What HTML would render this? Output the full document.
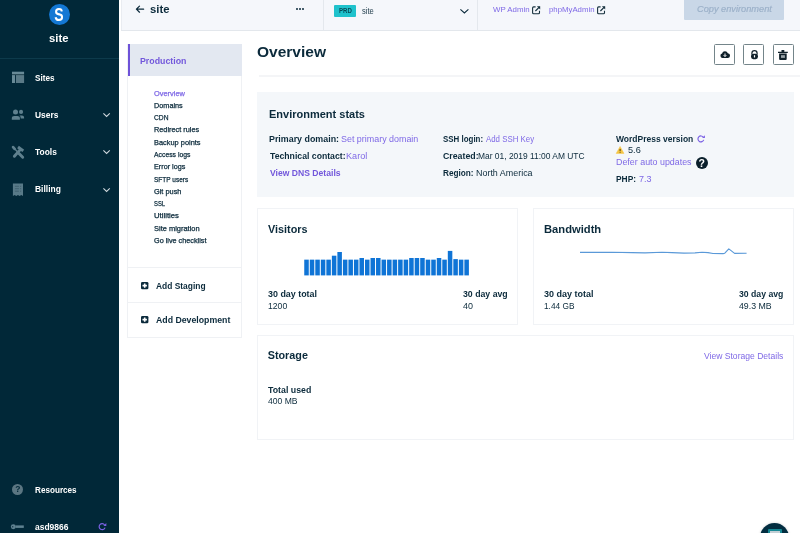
<!DOCTYPE html>
<html>
<head>
<meta charset="utf-8">
<title>site</title>
<style>
*{box-sizing:border-box;margin:0;padding:0}
html,body{width:800px;height:533px;overflow:hidden;background:#fff}
body{font-family:"Liberation Sans",sans-serif;color:#0b2a3b;position:relative}
.a{position:absolute}
.t{position:absolute;white-space:pre;font-family:"Liberation Sans",sans-serif;transform-origin:0 0}
svg{position:absolute;overflow:visible}
#side{position:absolute;left:0;top:0;width:119px;height:533px;background:#012838}
.ib{position:absolute;top:44px;width:21px;height:21px;border:1px solid #74858a;border-radius:1.5px;background:#fff}
.card{position:absolute;border:1px solid #f1f3f6;background:#fff}
</style>
</head>
<body>
<div id="root" style="position:absolute;left:0;top:0;width:800px;height:533px;will-change:transform;overflow:hidden">
<!-- sidebar -->
<div id="side"></div>
<div class="a" style="left:0;top:58px;width:119px;height:1px;background:#0d3a4b"></div>
<div class="a" style="left:48.75px;top:3.75px;width:21px;height:21px;border-radius:50%;background:#1478d4"></div>
<div class="t" style="left:53.2px;top:4.5px;width:12px;text-align:center;font-size:17.5px;line-height:21.5px;font-weight:bold;color:#fff;transform-origin:50% 50%;transform:scaleX(.8)">S</div>

<!-- sidebar icons -->
<svg style="left:0;top:0" width="119" height="533" viewBox="0 0 119 533">
  <!-- sites -->
  <rect x="12" y="71.7" width="12.1" height="2.3" fill="#688a97"/>
  <rect x="12" y="74" width="12.1" height="1.1" fill="#2b4c59"/>
  <rect x="12" y="75.1" width="3" height="7.9" fill="#688a97"/>
  <rect x="15.9" y="75.1" width="8.2" height="7.9" fill="#5a7a87"/>
  <!-- users -->
  <g fill="#5f808e">
  <circle cx="15.5" cy="111.9" r="2.5"/>
  <circle cx="21.05" cy="111.9" r="2.05"/>
  <path d="M11.8 119.8 V118.4 Q11.8 116 14.4 116 H17.2 Q19.9 116 19.9 118.4 V119.8 Z"/>
  <path d="M20.7 118.5 V117.9 Q20.7 116.4 19.5 115.5 H22 Q24.1 115.5 24.1 117.5 V118.5 Z"/>
  </g>
  <!-- tools -->
  <g stroke="#5f808e" fill="none">
  <path d="M14.4 156.3 L19.8 150.1" stroke-width="2.9" stroke-linecap="round"/>
  <path d="M18.0 147.0 L23.3 150.9" stroke-width="2.9"/>
  <path d="M19 153.5 L22.7 157.2" stroke-width="2.9" stroke-linecap="round"/>
  <path d="M14.4 148.6 L19 153.5" stroke-width="1.4"/>
  <path d="M13.1 147.1 L14.6 148.8" stroke-width="2.7" stroke-linecap="round"/>
  </g>
  <!-- billing -->
  <path d="M12.9 183.6 H23 V195.9 L21.3 194.9 L19.6 195.9 L17.95 194.9 L16.3 195.9 L14.6 194.9 L12.9 195.9 Z" fill="#587a88"/>
  <g stroke="#3b5c6a" stroke-width=".8"><path d="M14.9 186.3H18.9M20 186.3H21.2M14.9 188.7H18.9M20 188.7H21.2M14.9 191.2H18.9M20 191.2H21.2"/></g>
</svg>
<svg style="left:103px;top:112.6px" width="7.2" height="4" viewBox="0 0 7.2 4" fill="none" stroke="#d0d9de" stroke-width="1.1"><path d="M.4 .4 L3.6 3.4 L6.8 .4"/></svg>
<svg style="left:103px;top:150.1px" width="7.2" height="4" viewBox="0 0 7.2 4" fill="none" stroke="#d0d9de" stroke-width="1.1"><path d="M.4 .4 L3.6 3.4 L6.8 .4"/></svg>
<svg style="left:103px;top:187.6px" width="7.2" height="4" viewBox="0 0 7.2 4" fill="none" stroke="#d0d9de" stroke-width="1.1"><path d="M.4 .4 L3.6 3.4 L6.8 .4"/></svg>
<!-- resources ? -->
<div class="a" style="left:12.3px;top:484.2px;width:11px;height:11px;border-radius:50%;background:#5b7682"></div>
<div class="t" style="left:12.3px;top:484.4px;width:11px;text-align:center;font-size:8.5px;line-height:11px;font-weight:bold;color:#012838">?</div>
<!-- key -->
<svg style="left:0;top:0" width="119" height="533" viewBox="0 0 119 533"><circle cx="13.3" cy="526.7" r="2.45" fill="#5f8291"/><circle cx="12.7" cy="526.7" r=".75" fill="#17394a"/><rect x="15.4" y="525.4" width="8.4" height="2.5" fill="#5f8291"/></svg>
<!-- refresh purple -->
<svg style="left:98.2px;top:523px" width="8.6" height="7.6" viewBox="0 0 8.6 7.6" fill="none" stroke="#7b61e4" stroke-width="1.2">
  <path d="M6.6 2 A3 3 0 1 0 7 4.6"/><path d="M8.3 0 V2.9 H5.4 Z" fill="#7b61e4" stroke="none"/>
</svg>

<!-- top bar -->
<div class="a" style="left:121px;top:0;width:679px;height:30px;background:#f5f7fb"></div>
<div class="a" style="left:121px;top:0;width:1px;height:30px;background:#e9ecf1"></div>
<div class="a" style="left:121px;top:30px;width:679px;height:1px;background:#e3e7ec"></div>
<div class="a" style="left:323px;top:0;width:1px;height:30px;background:#e4e8ed"></div>
<div class="a" style="left:477px;top:0;width:1px;height:30px;background:#e4e8ed"></div>
<svg style="left:0;top:0" width="200" height="30" viewBox="0 0 200 30" fill="none" stroke="#0b2a3b" stroke-width="1.25" stroke-linejoin="round" stroke-linecap="round"><path d="M143.6 9.15 H136.6 M139.5 6.1 L136.4 9.15 L139.5 12.2"/></svg>
<div class="a" style="left:296.2px;top:8px;width:2.1px;height:2.1px;border-radius:50%;background:#0b2a3b"></div>
<div class="a" style="left:299.2px;top:8px;width:2.1px;height:2.1px;border-radius:50%;background:#0b2a3b"></div>
<div class="a" style="left:302.2px;top:8px;width:2.1px;height:2.1px;border-radius:50%;background:#0b2a3b"></div>
<div class="a" style="left:334.2px;top:5px;width:21.8px;height:11.8px;background:#1fc2cc;border-radius:1px"></div>
<svg style="left:460px;top:9.2px" width="8.8" height="4.6" viewBox="0 0 8.8 4.6" fill="none" stroke="#0b2a3b" stroke-width="1.1"><path d="M.4 .4 L4.4 4 L8.4 .4"/></svg>
<!-- external link icons -->
<svg style="left:532.4px;top:5.6px" width="8.4" height="8.4" viewBox="0 0 8.4 8.4" fill="none" stroke="#17323f" stroke-width="1.1"><path d="M3.6 .9 H1.6 Q.6 .9 .6 1.9 V6.8 Q.6 7.8 1.6 7.8 H6.5 Q7.5 7.8 7.5 6.8 V4.8"/><path d="M3.4 5 L7.6 .8" stroke-width="1.2"/><path d="M4.9 .2 H8.2 V3.5 Z" fill="#17323f" stroke="none"/></svg>
<svg style="left:597.4px;top:5.6px" width="8.4" height="8.4" viewBox="0 0 8.4 8.4" fill="none" stroke="#17323f" stroke-width="1.1"><path d="M3.6 .9 H1.6 Q.6 .9 .6 1.9 V6.8 Q.6 7.8 1.6 7.8 H6.5 Q7.5 7.8 7.5 6.8 V4.8"/><path d="M3.4 5 L7.6 .8" stroke-width="1.2"/><path d="M4.9 .2 H8.2 V3.5 Z" fill="#17323f" stroke="none"/></svg>
<div class="a" style="left:684px;top:0;width:100.4px;height:19.6px;background:#c9d7e7;border-radius:0 0 1px 1px"></div>

<!-- left nav panel -->
<div class="a" style="left:127px;top:44px;width:115px;height:293.5px;border:1px solid #eff1f4;background:#fff"></div>
<div class="a" style="left:127.5px;top:44px;width:114px;height:32px;background:#e3e8f1"></div>
<div class="a" style="left:127.5px;top:44px;width:2.4px;height:32px;background:#6e52d8"></div>
<div class="a" style="left:128px;top:267px;width:113px;height:1px;background:#eff1f4"></div>
<div class="a" style="left:128px;top:302px;width:113px;height:1px;background:#eff1f4"></div>
<svg style="left:141px;top:282.3px" width="7.4" height="7.2" viewBox="0 0 7.4 7.2"><rect x="0" y="0" width="7.4" height="7.2" rx="1.3" fill="#0b2a3b"/><path d="M3.7 1.4V5.8M1.5 3.6H5.9" stroke="#fff" stroke-width="1.6"/></svg>
<svg style="left:141px;top:316.2px" width="7.4" height="7.2" viewBox="0 0 7.4 7.2"><rect x="0" y="0" width="7.4" height="7.2" rx="1.3" fill="#0b2a3b"/><path d="M3.7 1.4V5.8M1.5 3.6H5.9" stroke="#fff" stroke-width="1.6"/></svg>

<!-- main header -->
<div class="ib" style="left:714px"></div>
<div class="ib" style="left:743.2px"></div>
<div class="ib" style="left:773px"></div>
<!-- cloud download -->
<svg style="left:720.1px;top:51.2px" width="10" height="7" viewBox="0 0 10 7.4"><path d="M2.4 7.4 A2.4 2.4 0 0 1 1.9 2.7 A3.2 3.2 0 0 1 8 2.4 A2.5 2.5 0 0 1 7.6 7.4 Z" fill="#10202a"/><path d="M5 2.6V5.6M3.6 4.4L5 5.9L6.4 4.4" stroke="#fff" stroke-width="1" fill="none"/></svg>
<!-- lock -->
<svg style="left:750.5px;top:49.9px" width="7" height="9.2" viewBox="0 0 7 9.2"><path d="M.9 4.4 V3.2 A2.6 2.6 0 0 1 6.1 3.2 V4.4" fill="#fff" stroke="#10202a" stroke-width="1.2"/><rect x="0" y="3.7" width="7" height="5.5" rx="2.4" fill="#10202a"/><rect x="2.9" y="5.2" width="1.2" height="2.3" fill="#fff"/></svg>
<!-- trash -->
<svg style="left:778.4px;top:49.6px" width="9.8" height="10.1" viewBox="0 0 9.8 10.1"><path d="M0 1.7H9.8V3H0Z M3.5 0H6.3V1.7H3.5Z" fill="#10202a"/><path d="M1.1 3.5H8.7V9.1Q8.7 10.1 7.7 10.1H2.1Q1.1 10.1 1.1 9.1Z" fill="#10202a"/><path d="M3 5.2H6.9V7.9H3Z" fill="#9aa4a9"/></svg>
<div class="a" style="left:259px;top:75px;width:541px;height:1.5px;background:#f4f5f7"></div>

<!-- env stats -->
<div class="a" style="left:257px;top:92px;width:537px;height:105px;background:#f4f7fa"></div>
<!-- refresh -->
<svg style="left:697.2px;top:134.8px" width="8.2" height="7.8" viewBox="0 0 9.4 9" fill="none" stroke="#7b61e4" stroke-width="1.35">
  <path d="M7.3 2.6 A3.4 3.4 0 1 0 7.7 5.6"/><path d="M9.1 .3 V3.5 H5.9 Z" fill="#7b61e4" stroke="none"/>
</svg>
<!-- warning -->
<svg style="left:616.2px;top:146px" width="8.2" height="7.9" viewBox="0 0 8.2 7.6"><path d="M4.1 .3 L8 7.3 H.2 Z" fill="#f4c542" stroke="#f4c542" stroke-width=".5" stroke-linejoin="round"/><path d="M4.1 2.8V5" stroke="#4a3a14" stroke-width="1"/><circle cx="4.1" cy="6.1" r=".55" fill="#4a3a14"/></svg>
<!-- help -->
<div class="a" style="left:695.6px;top:157px;width:12.3px;height:12.3px;border-radius:50%;background:#0a1f2b"></div>
<div class="t" style="left:695.6px;top:157px;width:12.3px;text-align:center;font-size:10.5px;line-height:12.5px;font-weight:bold;color:#fff">?</div>

<!-- cards -->
<div class="card" style="left:257px;top:207.5px;width:261px;height:117px"></div>
<div class="card" style="left:533.3px;top:207.5px;width:261px;height:117px"></div>
<div class="card" style="left:257px;top:335.3px;width:537.3px;height:104.5px"></div>

<!-- bar chart -->
<svg style="left:0;top:0" width="800" height="533" viewBox="0 0 800 533"><g fill="#0f74d6">
<rect x="304.25" y="259.65" width="4.52" height="15.75"/><rect x="309.77" y="259.65" width="4.52" height="15.75"/><rect x="315.29" y="259.65" width="4.52" height="15.75"/><rect x="320.81" y="259.65" width="4.52" height="15.75"/><rect x="326.34" y="259.65" width="4.52" height="15.75"/><rect x="331.86" y="255.70" width="4.52" height="19.70"/><rect x="337.38" y="252.00" width="4.52" height="23.40"/><rect x="342.90" y="259.65" width="4.52" height="15.75"/><rect x="348.42" y="259.65" width="4.52" height="15.75"/><rect x="353.94" y="259.65" width="4.52" height="15.75"/><rect x="359.47" y="258.00" width="4.52" height="17.40"/><rect x="364.99" y="259.65" width="4.52" height="15.75"/><rect x="370.51" y="258.00" width="4.52" height="17.40"/><rect x="376.03" y="258.00" width="4.52" height="17.40"/><rect x="381.55" y="259.65" width="4.52" height="15.75"/><rect x="387.07" y="259.65" width="4.52" height="15.75"/><rect x="392.60" y="259.65" width="4.52" height="15.75"/><rect x="398.12" y="259.65" width="4.52" height="15.75"/><rect x="403.64" y="259.65" width="4.52" height="15.75"/><rect x="409.16" y="258.00" width="4.52" height="17.40"/><rect x="414.68" y="258.00" width="4.52" height="17.40"/><rect x="420.20" y="258.00" width="4.52" height="17.40"/><rect x="425.73" y="259.65" width="4.52" height="15.75"/><rect x="431.25" y="259.65" width="4.52" height="15.75"/><rect x="436.77" y="258.00" width="4.52" height="17.40"/><rect x="442.29" y="259.65" width="4.52" height="15.75"/><rect x="447.81" y="250.90" width="4.52" height="24.50"/><rect x="453.33" y="259.10" width="4.52" height="16.30"/><rect x="458.86" y="259.65" width="4.52" height="15.75"/><rect x="464.38" y="259.65" width="4.52" height="15.75"/>
</g>
<path d="M580 252.4 L612 252.2 L632 252.6 L645 252.9 L662 252.2 L672 252.6 L684 253.1 L695 252.9 L702 252.3 L708 252.6 L713 253.5 L723 253.6 L724.8 253.2 L728.8 248.9 L734.6 253.4 L746.6 253.2" fill="none" stroke="#5a99d8" stroke-width="1.15" stroke-linejoin="round"/>
</svg>

<!-- chat bubble -->
<div class="a" style="left:760.2px;top:523.2px;width:29px;height:29px;border-radius:50%;background:#022d40;box-shadow:0 0 3px rgba(0,20,30,.18)"></div>
<div class="a" style="left:768px;top:528.9px;width:13.7px;height:10px;border:2.5px solid #178894;border-radius:1px;background:#c3cfd5"></div>

<div class="t" style="left:49.22px;top:31.000px;font-size:11.2px;line-height:15px;color:#ffffff;transform:scaleX(1.0102);font-weight:bold">site</div>
<div class="t" style="left:35.26px;top:72.000px;font-size:9.6px;line-height:12px;color:#ffffff;transform:scaleX(0.8512);font-weight:bold">Sites</div>
<div class="t" style="left:35.26px;top:109.000px;font-size:9.6px;line-height:12px;color:#ffffff;transform:scaleX(0.8745);font-weight:bold">Users</div>
<div class="t" style="left:35.26px;top:146.000px;font-size:9.6px;line-height:12px;color:#ffffff;transform:scaleX(0.8773);font-weight:bold">Tools</div>
<div class="t" style="left:35.26px;top:183.000px;font-size:9.6px;line-height:12px;color:#ffffff;transform:scaleX(0.8810);font-weight:bold">Billing</div>
<div class="t" style="left:35.26px;top:484.000px;font-size:9.6px;line-height:12px;color:#ffffff;transform:scaleX(0.8484);font-weight:bold">Resources</div>
<div class="t" style="left:34.76px;top:521.000px;font-size:9.6px;line-height:12px;color:#ffffff;transform:scaleX(0.8825);font-weight:bold">asd9866</div>
<div class="t" style="left:150.47px;top:2.000px;font-size:11.2px;line-height:15px;color:#0b2a3b;transform:scaleX(1.0102);font-weight:bold">site</div>
<div class="t" style="left:338.73px;top:6.000px;font-size:6.7px;line-height:9px;color:#064b58;transform:scaleX(0.9158);font-weight:bold">PRD</div>
<div class="t" style="left:361.55px;top:6.000px;font-size:8.2px;line-height:11px;color:#1d3a49;transform:scaleX(0.9242)">site</div>
<div class="t" style="left:493.42px;top:5.000px;font-size:7.3px;line-height:9px;color:#7f69e6;transform:scaleX(1.0777)">WP Admin</div>
<div class="t" style="left:548.82px;top:5.000px;font-size:7.3px;line-height:9px;color:#7f69e6;transform:scaleX(1.0676)">phpMyAdmin</div>
<div class="t" style="left:697.08px;top:4.000px;font-size:8.6px;line-height:11px;color:#9cb1c9;transform:scaleX(1.0732);font-style:italic;-webkit-text-stroke:0.2px #9cb1c9">Copy environment</div>
<div class="t" style="left:140.08px;top:55.000px;font-size:9px;line-height:12px;color:#7257db;transform:scaleX(0.9776);font-weight:bold">Production</div>
<div class="t" style="left:153.72px;top:89.000px;font-size:7.3px;line-height:9px;color:#7f69e6;transform:scaleX(1.0149);-webkit-text-stroke:0.25px #7f69e6">Overview</div>
<div class="t" style="left:153.72px;top:101.000px;font-size:7.3px;line-height:9px;color:#0b2a3b;transform:scaleX(0.9992);-webkit-text-stroke:0.25px #0b2a3b">Domains</div>
<div class="t" style="left:153.72px;top:113.000px;font-size:7.3px;line-height:9px;color:#0b2a3b;transform:scaleX(0.9154);-webkit-text-stroke:0.25px #0b2a3b">CDN</div>
<div class="t" style="left:153.72px;top:125.000px;font-size:7.3px;line-height:9px;color:#0b2a3b;transform:scaleX(1.0035);-webkit-text-stroke:0.25px #0b2a3b">Redirect rules</div>
<div class="t" style="left:153.72px;top:138.000px;font-size:7.3px;line-height:9px;color:#0b2a3b;transform:scaleX(1.0159);-webkit-text-stroke:0.25px #0b2a3b">Backup points</div>
<div class="t" style="left:153.72px;top:150.000px;font-size:7.3px;line-height:9px;color:#0b2a3b;transform:scaleX(0.9355);-webkit-text-stroke:0.25px #0b2a3b">Access logs</div>
<div class="t" style="left:153.72px;top:162.000px;font-size:7.3px;line-height:9px;color:#0b2a3b;transform:scaleX(0.9916);-webkit-text-stroke:0.25px #0b2a3b">Error logs</div>
<div class="t" style="left:153.72px;top:175.000px;font-size:7.3px;line-height:9px;color:#0b2a3b;transform:scaleX(0.8902);-webkit-text-stroke:0.25px #0b2a3b">SFTP users</div>
<div class="t" style="left:153.72px;top:187.000px;font-size:7.3px;line-height:9px;color:#0b2a3b;transform:scaleX(1.0106);-webkit-text-stroke:0.25px #0b2a3b">Git push</div>
<div class="t" style="left:153.72px;top:199.000px;font-size:7.3px;line-height:9px;color:#0b2a3b;transform:scaleX(0.8027);-webkit-text-stroke:0.25px #0b2a3b">SSL</div>
<div class="t" style="left:153.72px;top:211.000px;font-size:7.3px;line-height:9px;color:#0b2a3b;transform:scaleX(1.0620);-webkit-text-stroke:0.25px #0b2a3b">Utilities</div>
<div class="t" style="left:153.72px;top:224.000px;font-size:7.3px;line-height:9px;color:#0b2a3b;transform:scaleX(1.0235);-webkit-text-stroke:0.25px #0b2a3b">Site migration</div>
<div class="t" style="left:153.72px;top:236.000px;font-size:7.3px;line-height:9px;color:#0b2a3b;transform:scaleX(0.9954);-webkit-text-stroke:0.25px #0b2a3b">Go live checklist</div>
<div class="t" style="left:155.69px;top:281.000px;font-size:8.6px;line-height:11px;color:#0b2a3b;transform:scaleX(0.9792);font-weight:bold">Add Staging</div>
<div class="t" style="left:155.69px;top:315.000px;font-size:8.6px;line-height:11px;color:#0b2a3b;transform:scaleX(1.0177);font-weight:bold">Add Development</div>
<div class="t" style="left:257.12px;top:42.000px;font-size:15px;line-height:20px;color:#0b2a3b;transform:scaleX(1.0338);font-weight:bold">Overview</div>
<div class="t" style="left:269.48px;top:107.000px;font-size:10.8px;line-height:14px;color:#0b2a3b;transform:scaleX(1.0186);font-weight:bold">Environment stats</div>
<div class="t" style="left:269.08px;top:134.000px;font-size:8.7px;line-height:11px;color:#0b2a3b;transform:scaleX(1.0212);font-weight:bold">Primary domain:</div>
<div class="t" style="left:340.53px;top:134.000px;font-size:8.7px;line-height:11px;color:#7f69e6;transform:scaleX(1.0264)">Set primary domain</div>
<div class="t" style="left:269.78px;top:151.000px;font-size:8.7px;line-height:11px;color:#0b2a3b;transform:scaleX(0.9990);font-weight:bold">Technical contact:</div>
<div class="t" style="left:346.08px;top:151.000px;font-size:8.7px;line-height:11px;color:#7f69e6;transform:scaleX(1.0485)">Karol</div>
<div class="t" style="left:269.78px;top:168.000px;font-size:8.7px;line-height:11px;color:#7257db;transform:scaleX(0.9895);font-weight:bold">View DNS Details</div>
<div class="t" style="left:442.78px;top:134.000px;font-size:8.7px;line-height:11px;color:#0b2a3b;transform:scaleX(0.9122);font-weight:bold">SSH login:</div>
<div class="t" style="left:485.53px;top:134.000px;font-size:8.7px;line-height:11px;color:#7f69e6;transform:scaleX(0.9057)">Add SSH Key</div>
<div class="t" style="left:442.78px;top:151.000px;font-size:8.7px;line-height:11px;color:#0b2a3b;transform:scaleX(1.0090);font-weight:bold">Created:</div>
<div class="t" style="left:478.28px;top:151.000px;font-size:8.7px;line-height:11px;color:#0b2a3b;transform:scaleX(0.9693)">Mar 01, 2019 11:00 AM UTC</div>
<div class="t" style="left:442.78px;top:168.000px;font-size:8.7px;line-height:11px;color:#0b2a3b;transform:scaleX(0.9450);font-weight:bold">Region:</div>
<div class="t" style="left:475.53px;top:168.000px;font-size:8.7px;line-height:11px;color:#0b2a3b;transform:scaleX(1.0276)">North America</div>
<div class="t" style="left:616.03px;top:134.000px;font-size:8.7px;line-height:11px;color:#0b2a3b;transform:scaleX(0.9783);font-weight:bold">WordPress version</div>
<div class="t" style="left:627.63px;top:145.000px;font-size:8.7px;line-height:11px;color:#0b2a3b;transform:scaleX(1.0528)">5.6</div>
<div class="t" style="left:615.53px;top:157.000px;font-size:8.7px;line-height:11px;color:#7f69e6;transform:scaleX(1.0225)">Defer auto updates</div>
<div class="t" style="left:616.03px;top:174.000px;font-size:8.7px;line-height:11px;color:#0b2a3b;transform:scaleX(0.9639);font-weight:bold">PHP:</div>
<div class="t" style="left:639.08px;top:174.000px;font-size:8.7px;line-height:11px;color:#7f69e6;transform:scaleX(1.0362)">7.3</div>
<div class="t" style="left:267.93px;top:222.000px;font-size:10.8px;line-height:14px;color:#0b2a3b;transform:scaleX(1.0020);font-weight:bold">Visitors</div>
<div class="t" style="left:544.13px;top:222.000px;font-size:10.8px;line-height:14px;color:#0b2a3b;transform:scaleX(1.0365);font-weight:bold">Bandwidth</div>
<div class="t" style="left:267.73px;top:348.000px;font-size:10.8px;line-height:14px;color:#0b2a3b;transform:scaleX(1.0000);font-weight:bold">Storage</div>
<div class="t" style="left:267.68px;top:289.000px;font-size:8.7px;line-height:11px;color:#0b2a3b;transform:scaleX(1.0252);font-weight:bold">30 day total</div>
<div class="t" style="left:267.63px;top:301.000px;font-size:8.7px;line-height:11px;color:#0b2a3b;transform:scaleX(0.9942)">1200</div>
<div class="t" style="left:463.08px;top:289.000px;font-size:8.7px;line-height:11px;color:#0b2a3b;transform:scaleX(1.0063);font-weight:bold">30 day avg</div>
<div class="t" style="left:463.08px;top:301.000px;font-size:8.7px;line-height:11px;color:#0b2a3b;transform:scaleX(1.0304)">40</div>
<div class="t" style="left:543.98px;top:289.000px;font-size:8.7px;line-height:11px;color:#0b2a3b;transform:scaleX(1.0346);font-weight:bold">30 day total</div>
<div class="t" style="left:544.43px;top:301.000px;font-size:8.7px;line-height:11px;color:#0b2a3b;transform:scaleX(0.9542)">1.44 GB</div>
<div class="t" style="left:739.03px;top:289.000px;font-size:8.7px;line-height:11px;color:#0b2a3b;transform:scaleX(0.9995);font-weight:bold">30 day avg</div>
<div class="t" style="left:739.03px;top:301.000px;font-size:8.7px;line-height:11px;color:#0b2a3b;transform:scaleX(1.0079)">49.3 MB</div>
<div class="t" style="left:703.53px;top:351.000px;font-size:8.7px;line-height:11px;color:#7f69e6;transform:scaleX(0.9855)">View Storage Details</div>
<div class="t" style="left:267.78px;top:385.000px;font-size:8.7px;line-height:11px;color:#0b2a3b;transform:scaleX(1.0121);font-weight:bold">Total used</div>
<div class="t" style="left:267.78px;top:396.000px;font-size:8.7px;line-height:11px;color:#0b2a3b;transform:scaleX(0.9871)">400 MB</div>
</div>
</body>
</html>
